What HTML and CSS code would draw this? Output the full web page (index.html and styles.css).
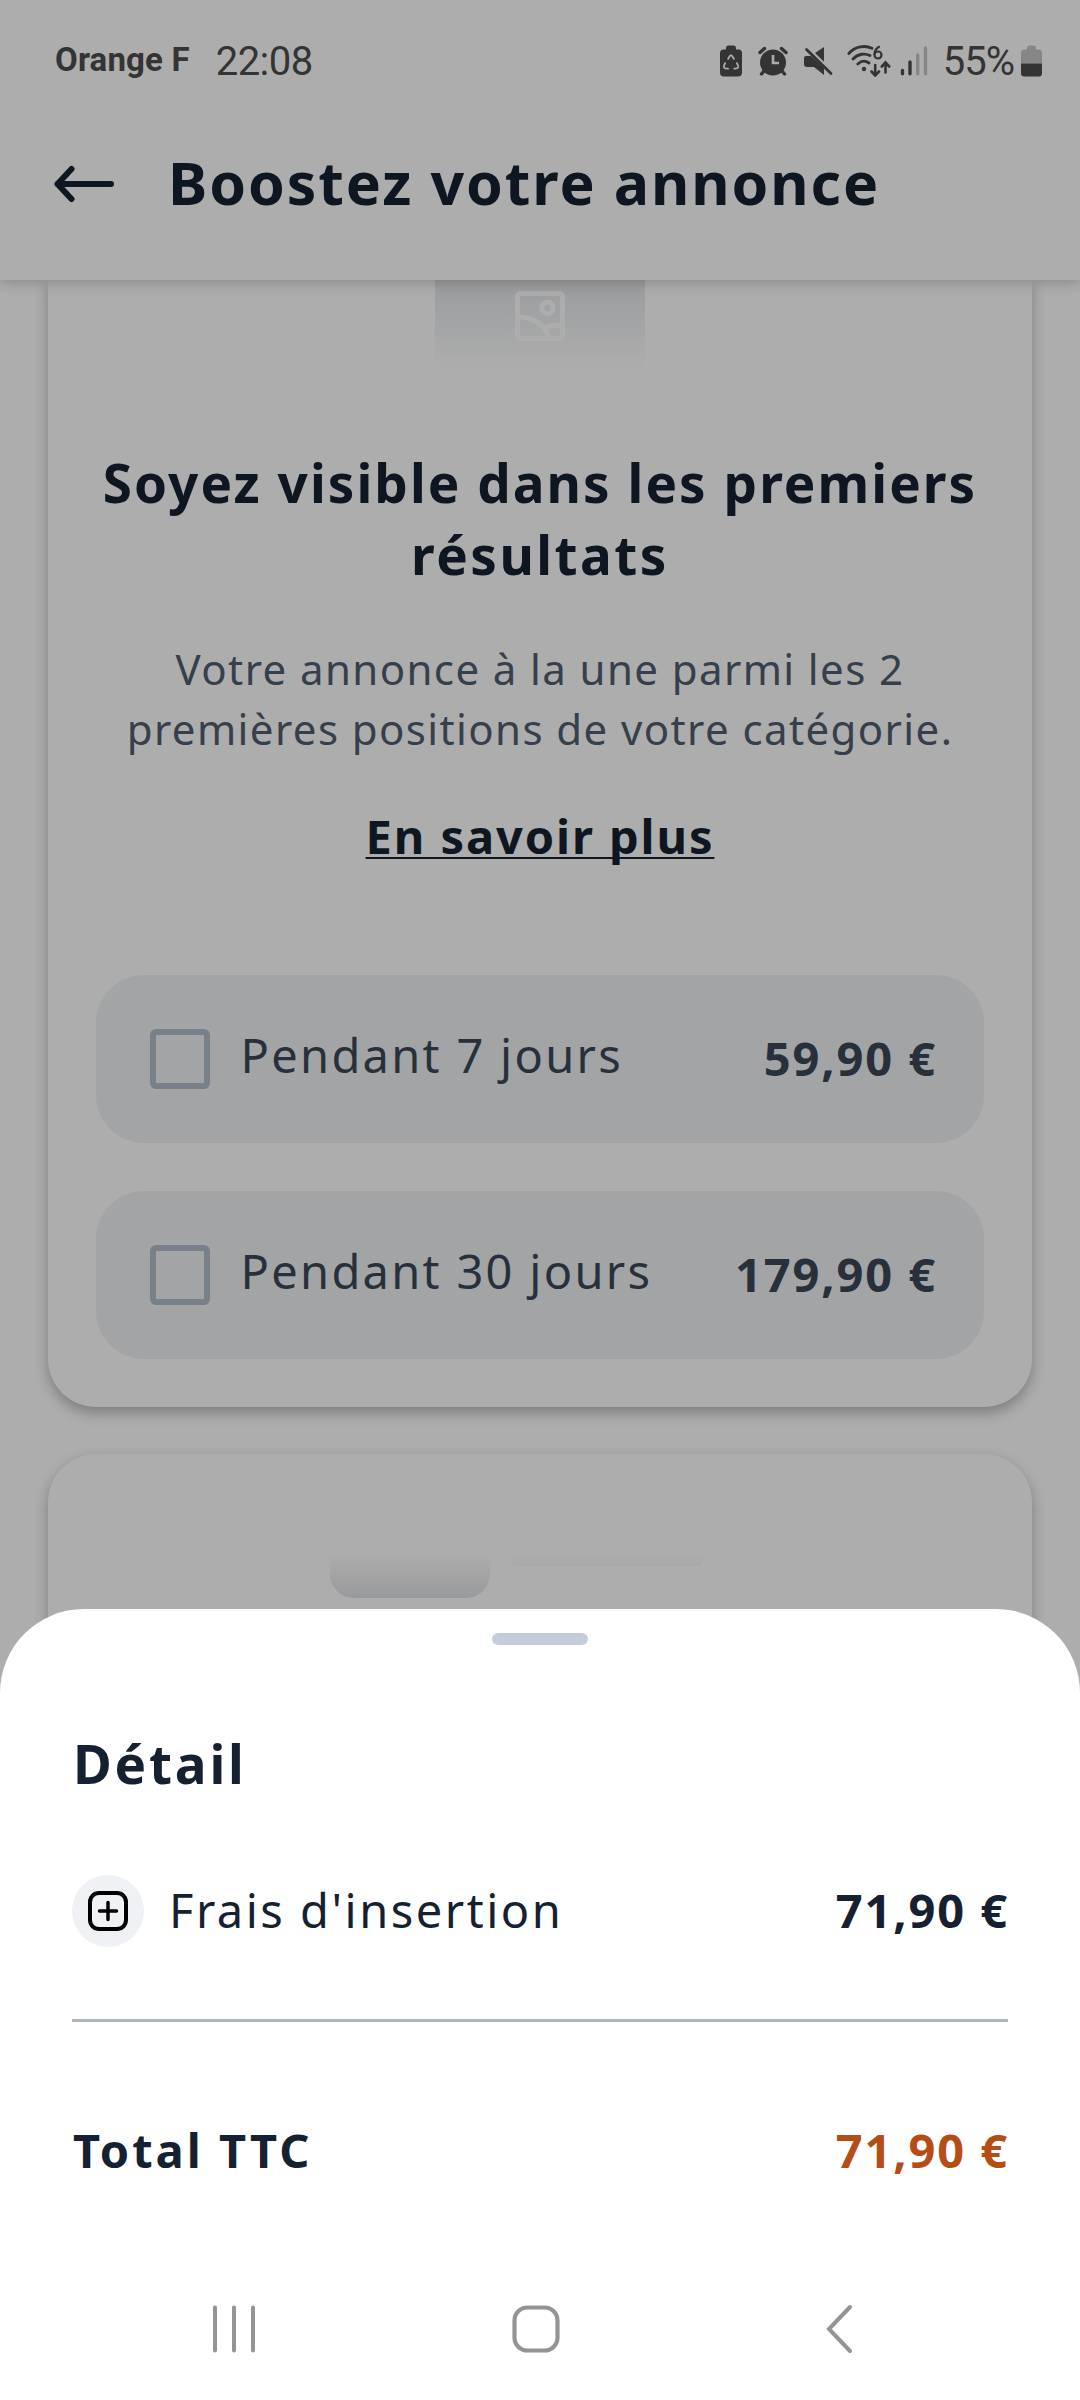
FILE: index.html
```html
<!DOCTYPE html>
<html lang="fr">
<head>
<meta charset="utf-8">
<title>Boostez votre annonce</title>
<link rel="stylesheet" href="styles.css">
</head>
<body>
<div class="screen">
  <header class="header">
    <div class="status">
      <span class="carrier">Orange F</span>
      <span class="time">22:08</span>
      <div class="status-icons">
        <svg class="i-saver" width="22" height="32" viewBox="0 0 22 32"><path d="M6 3Q6 .5 8 .5H14Q16 .5 16 3V4.500H18.500Q22 4.500 22 8V27.500Q22 31.500 18 31.500H4Q0 31.500 0 27.500V8Q0 4.500 3.500 4.500H6Z" fill="#343434"/><path d="M7.700 14.500L9.500 11.500Q11 9.300 12.500 11.500L14.300 14.500M16.500 17.500L18 20.500Q19 23.600 15.500 23.600H13.500M8.800 23.600H6.500Q3 23.600 4 20.500L5.500 17.500" fill="none" stroke="#adadad" stroke-width="1.700"/></svg>
        <svg class="i-alarm" width="30" height="30" viewBox="0 0 30 30"><circle cx="15" cy="16.500" r="13" fill="#343434"/><path d="M2 6.500L6.500 2.500M23.500 2.500L28 6.500M6 25L3.500 28M24 25L26.500 28" stroke="#343434" stroke-width="3.400" stroke-linecap="round"/><path d="M15 9V17H21" fill="none" stroke="#adadad" stroke-width="2.600"/></svg>
        <svg class="i-mute" width="30" height="30" viewBox="0 0 30 30"><path d="M3 10H8L21 22V29L11 21H4Q1 21 1 18V12Q1 10 3 10ZM21 1V16L12 7Z" fill="#343434"/><path d="M3.500 .8L30 26" stroke="#adadad" stroke-width="2.200"/><path d="M3.500 3.500L28 27.500" stroke="#343434" stroke-width="2.800" stroke-linecap="round"/></svg>
        <svg class="i-wifi" width="44" height="32" viewBox="0 0 44 32"><g fill="none" stroke="#343434" stroke-width="2.800" stroke-linecap="round"><path d="M1.800 8.500C8 1.200 18 0 25 3.200M6 14C11 8.500 18 8 23 10.500M10.800 19C14.500 15.500 18.500 15.500 22 18"/><path stroke-width="2.200" d="M32 1.800Q27.500 4.500 27.500 9"/><circle cx="31" cy="10" r="3.500" stroke-width="2.200"/><path stroke-width="2.600" d="M28.200 20V29.500M24.500 26.500L28.200 30.500L32 26.500M38.500 27.500V18M34.800 21.500L38.500 17.500L42.200 21.500"/></g><circle cx="17" cy="24" r="2.200" fill="#343434"/></svg>
        <svg class="i-signal" width="28" height="30" viewBox="0 0 28 30"><g stroke-width="3.400" stroke-linecap="round"><path d="M2.500 24.500V27.800M10 16V27.800" stroke="#343434"/><path d="M17.700 9V27.800M25.500 2V27.800" stroke="#868686"/></g></svg>
        <span class="percent">55%</span>
        <svg class="i-battery" width="21" height="32" viewBox="0 0 21 32"><path d="M6 3Q6 .5 8 .5H13Q15 .5 15 3V4.500H17.500Q21 4.500 21 8V18.500H0V8Q0 4.500 3.500 4.500H6Z" fill="#868686"/><path d="M0 18.500H21V28Q21 31.500 18 31.500H3Q0 31.500 0 28Z" fill="#343434"/></svg>
      </div>
    </div>
    <div class="title-row">
      <svg width="60" height="38" viewBox="0 0 60 38"><path d="M57 19H3.500M17.500 4L3.500 19L17.500 34" fill="none" stroke="#0e1622" stroke-width="6" stroke-linecap="round" stroke-linejoin="round"/></svg>
      <h1 class="title">Boostez votre annonce</h1>
    </div>
  </header>

  <main class="content">
    <section class="card card-first">
      <div class="media">
        <svg width="50" height="50" viewBox="0 0 50 50"><g fill="none" stroke="#adadad" stroke-width="5"><rect x="2.500" y="2.500" width="45" height="45" rx="3"/><circle cx="32.500" cy="17" r="5.700"/><path d="M3 26C18 26 29 33 34 47M30 37Q37 33.500 47 34.500"/></g></svg>
      </div>
      <h2 class="heading">Soyez visible dans les premiers<br><span class="heading-end">résultats</span></h2>
      <p class="desc">Votre annonce à la une parmi les 2<br>premières positions de votre catégorie.</p>
      <a class="more">En savoir plus</a>
      <div class="options">
        <label class="option"><span class="box"></span><span class="option-label">Pendant 7 jours</span><span class="option-price">59,90 €</span></label>
        <label class="option"><span class="box"></span><span class="option-label">Pendant 30 jours</span><span class="option-price">179,90 €</span></label>
      </div>
    </section>
    <section class="card card-next">
      <div class="ghost-tile"></div>
      <div class="ghost-line"></div>
    </section>
  </main>

  <section class="sheet">
    <div class="handle"></div>
    <h2 class="sheet-title">Détail</h2>
    <div class="fee">
      <span class="badge"><svg width="40" height="40" viewBox="0 0 40 40"><g fill="none" stroke="#000" stroke-width="4" stroke-linecap="round"><rect x="2" y="2" width="36" height="36" rx="9"/><path d="M20 11.500V28.500M11.500 20H28.500" stroke-width="3.500"/></g></svg></span>
      <span class="fee-label">Frais d'insertion</span>
      <span class="amount">71,90 €</span>
    </div>
    <hr class="rule">
    <div class="total"><span class="total-label">Total TTC</span><span class="amount amount-total">71,90 €</span></div>
    <nav class="nav">
      <svg width="44" height="50" viewBox="0 0 44 50"><path d="M3 3.500V46.500M22 3.500V46.500M41 3.500V46.500" stroke="#949494" stroke-width="4" stroke-linecap="round"/></svg>
      <svg width="48" height="48" viewBox="0 0 48 48"><rect x="2.500" y="2.500" width="43" height="43" rx="13" fill="none" stroke="#949494" stroke-width="4.200"/></svg>
      <svg width="30" height="50" viewBox="0 0 30 50"><path d="M26 3L5 25L26 47" fill="none" stroke="#949494" stroke-width="4" stroke-linecap="round"/></svg>
    </nav>
  </section>
</div>
</body>
</html>
```
FILE: styles.css
```css
* { box-sizing: border-box; margin: 0; padding: 0; }
body { background: #adadad; font-family: "Noto Sans", "Open Sans", sans-serif; color: #0e1622; }
svg { display: block; flex: none; }
.screen { width: 1080px; height: 2400px; display: flex; flex-direction: column; overflow: hidden; }

.header { flex: none; height: 280px; background: #adadad; box-shadow: 0 2px 14px rgba(0, 0, 0, .22); position: relative; z-index: 1; }
.status { height: 122px; padding: 0 38px 0 55px; display: flex; align-items: center; color: #343434; font-family: Roboto, sans-serif; }
.carrier { font-size: 33px; font-weight: 700; padding-bottom: 3px; letter-spacing: .15px; }
.time { font-size: 40px; margin-left: 26px; letter-spacing: -.5px; }
.status-icons { margin-left: auto; display: flex; align-items: center; }
.i-alarm { margin-left: 16px; }
.i-mute { margin-left: 15px; }
.i-wifi { margin-left: 14px; }
.i-signal { margin-left: 9px; }
.percent { margin-left: 15px; font-size: 40px; letter-spacing: -1px; }
.i-battery { margin-left: 7px; }

.title-row { height: 124px; padding-left: 54px; display: flex; align-items: center; gap: 54px; }
.title { font-size: 59px; font-weight: 700; line-height: 72px; padding-bottom: 4px; letter-spacing: 1.9px; }

.content { flex: none; height: 1425px; padding: 0 48px; overflow: hidden; display: flex; flex-direction: column; gap: 47px; }
.card { flex: none; background: #adadad; box-shadow: 0 6px 14px rgba(0, 0, 0, .28); }
.card-first { padding: 0 48px 48px; border-radius: 0 0 48px 48px; display: flex; flex-direction: column; align-items: center; text-align: center; }
.media { width: 210px; height: 90px; padding-top: 11px; display: flex; justify-content: center; background: linear-gradient(#9a9c9e, #adadad); }
.heading { margin-top: 77px; font-size: 53px; font-weight: 700; line-height: 72px; letter-spacing: 2.05px; }
.heading-end { letter-spacing: 2.5px; }
.desc { margin-top: 48px; font-size: 42px; line-height: 60px; letter-spacing: 1.4px; color: #363f4b; }
.more { margin-top: 44px; font-size: 47px; font-weight: 700; line-height: 66px; letter-spacing: 1.9px; text-decoration: underline; text-decoration-thickness: 2px; text-underline-offset: 3px; text-decoration-skip-ink: none; }
.options { width: 100%; margin-top: 106px; display: flex; flex-direction: column; gap: 48px; }
.option { height: 168px; padding: 0 48px 0 54px; border-radius: 48px; background: #a2a4a6; display: flex; align-items: center; color: #28303b; font-size: 47px; }
.box { width: 60px; height: 60px; border: 6px solid #78808a; border-radius: 6px; }
.option-label { margin-left: 28px; padding: 0 0 8px 2.5px; letter-spacing: 2.3px; }
.option-price { margin-left: auto; padding-bottom: 2px; font-weight: 700; letter-spacing: 1.9px; margin-right: -1px; }

.card-next { height: 400px; border-radius: 48px; padding: 99px 0 0 282px; display: flex; gap: 21px; }
.ghost-tile { width: 160px; height: 45px; border-radius: 0 0 24px 24px; background: linear-gradient(#adadad, #999a9c); }
.ghost-line { width: 191px; height: 13px; border-radius: 0 0 4px 4px; background: linear-gradient(#adadad, #a8a8a8); }

.sheet { flex: 1; margin-top: -96px; padding: 24px 72px 0; background: #fff; border-radius: 84px 84px 0 0; position: relative; z-index: 2; display: flex; flex-direction: column; color: #152131; font-size: 47px; line-height: 66px; }
.handle { flex: none; width: 96px; height: 12px; border-radius: 6px; background: #c3ccd8; align-self: center; }
.sheet-title { margin-top: 83px; font-size: 53px; font-weight: 700; line-height: 72px; letter-spacing: 2.8px; padding-left: 1px; }
.fee { margin-top: 75px; height: 72px; display: flex; align-items: center; }
.badge { width: 72px; height: 72px; border-radius: 50%; background: #f0f1f5; display: flex; align-items: center; justify-content: center; }
.fee-label { margin-left: 25px; padding-bottom: 3px; letter-spacing: 2.5px; }
.amount { margin-left: auto; margin-right: -1px; font-weight: 700; letter-spacing: 1.9px; }
.fee .amount { padding-bottom: 3px; }
.rule { margin-top: 72px; border: 0; height: 3px; background: #aeb6c1; }
.total { margin-top: 95px; display: flex; }
.total-label { font-weight: 700; letter-spacing: 3px; padding-left: 1px; }
.amount-total { color: #b54d17; }
.nav { flex: none; margin: auto 0 0; padding: 0 18px 0 11px; height: 142px; display: grid; grid-template-columns: repeat(3, 1fr); align-items: center; justify-items: center; }
```
